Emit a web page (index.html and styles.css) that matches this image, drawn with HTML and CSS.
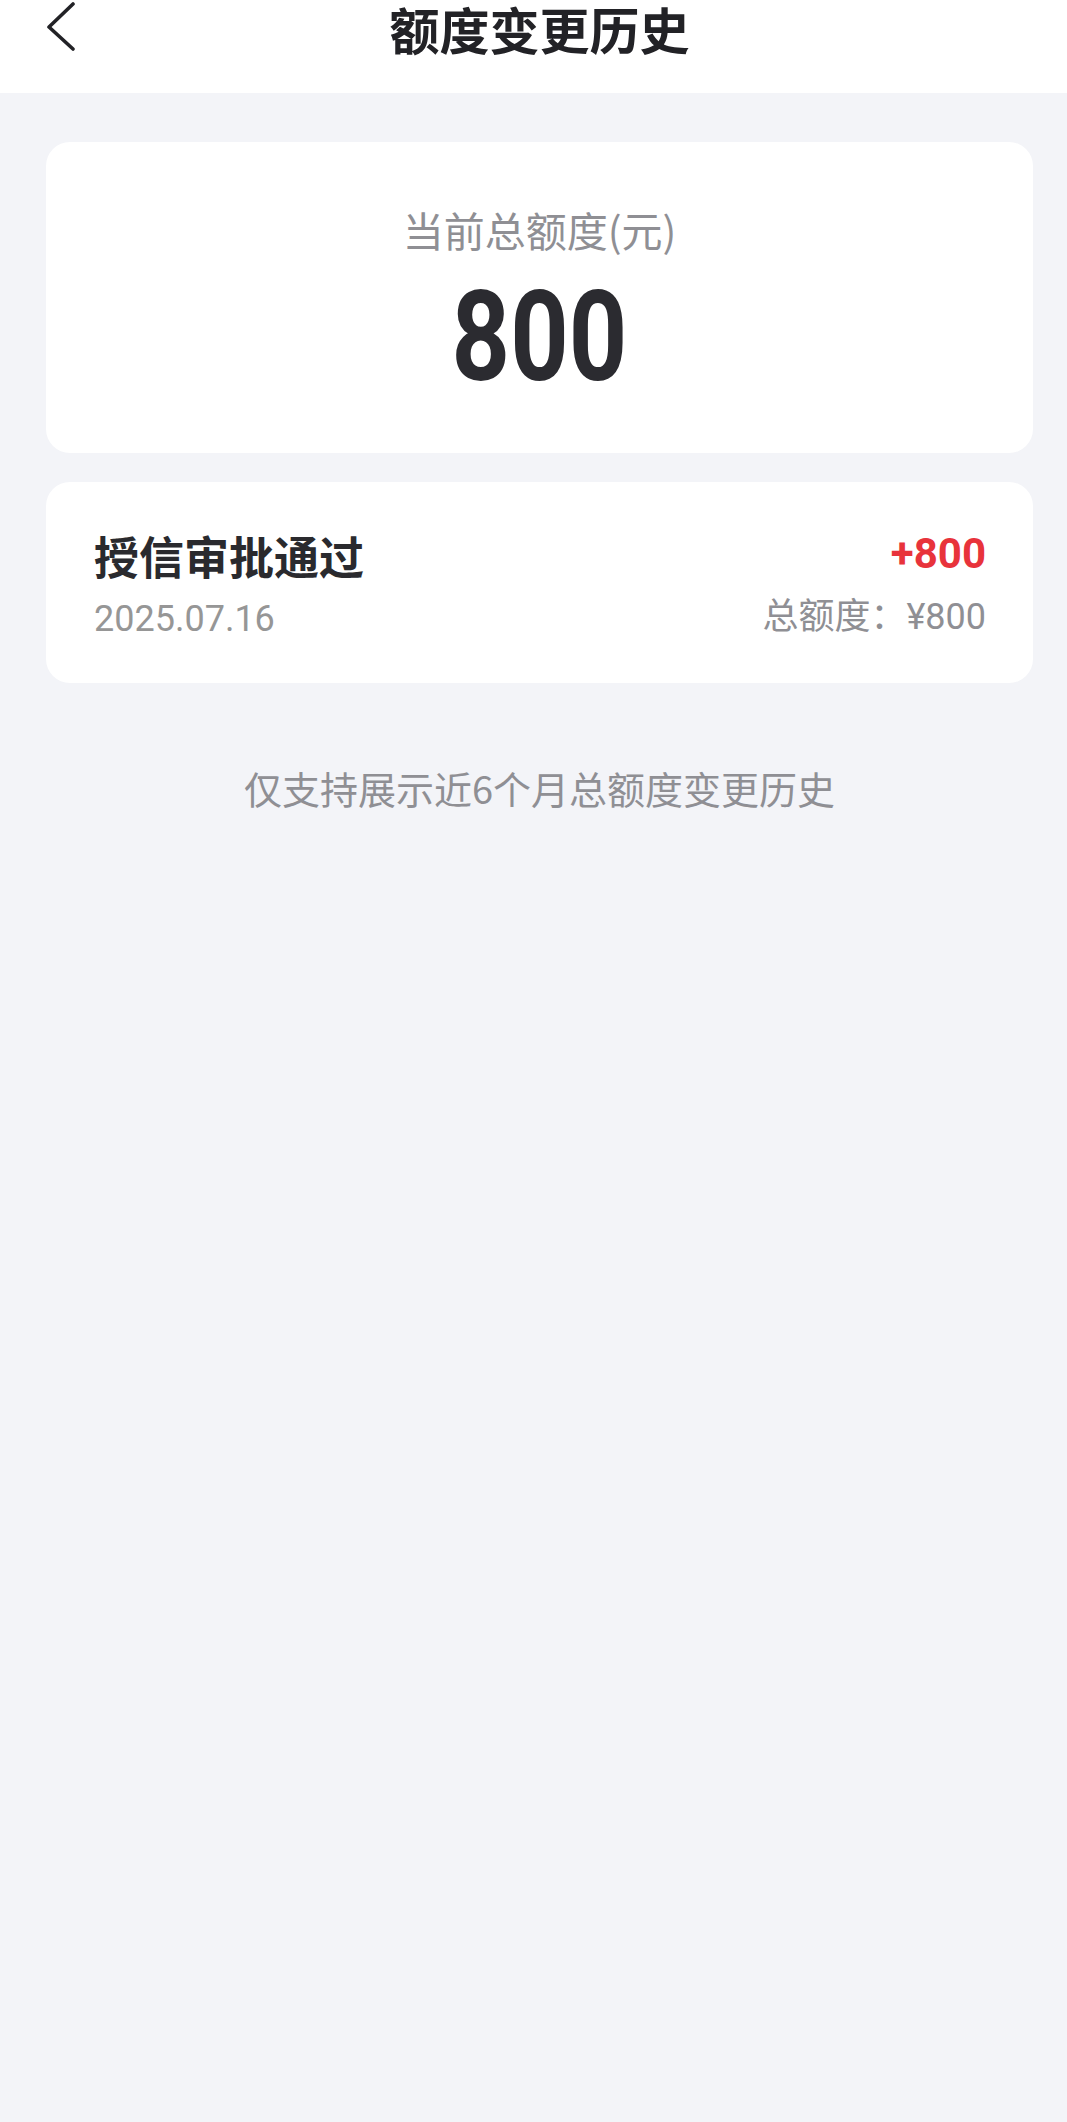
FILE: index.html
```html
<!DOCTYPE html>
<html>
<head>
    <meta charset="UTF-8" />
    <title>额度变更历史</title>
    <link rel="stylesheet" href="styles.css">
</head>
<body>
    <div class="top-bar">
        <a class="back" href="#">
            <svg width="30" height="50" viewBox="0 0 30 50">
                <path d="M27 2 L3 25 L27 47" fill="none" stroke="#222226" stroke-width="3.6" stroke-linecap="round" stroke-linejoin="round" />
            </svg>
        </a>
        <h1 class="title">额度变更历史</h1>
    </div>

    <div class="content">
        <div class="total-card">
            <p class="total-label">当前总额度(元)</p>
            <p class="total-value"><span>800</span></p>
        </div>

        <div class="record">
            <div class="record-left">
                <p class="record-name">授信审批通过</p>
                <p class="record-date">2025.07.16</p>
            </div>
            <div class="record-right">
                <p class="record-change">+800</p>
                <p class="record-total">总额度：¥800</p>
            </div>
        </div>

        <p class="tip">仅支持展示近6个月总额度变更历史</p>
    </div>
</body>
</html>
```

FILE: styles.css
```css
* {
    margin: 0;
    padding: 0;
    box-sizing: border-box;
}
body {
    font-family: Roboto, "Noto Sans CJK SC", sans-serif;
    background-color: #f3f4f8;
    min-height: 2122px;
}
.top-bar {
    height: 93px;
    padding-left: 12px;
    background-color: #fff;
    position: relative;
}
.back {
    position: absolute;
    left: 46px;
    top: 2px;
    display: block;
    width: 30px;
    height: 50px;
}
.back svg {
    display: block;
}
.title {
    text-align: center;
    font-family: "Noto Sans CJK SC", sans-serif;
    font-size: 50px;
    font-weight: 700;
    line-height: 56px;
    color: #222226;
}
.content {
    padding: 49px 34px 0 46px;
}
.total-card {
    background-color: #fff;
    border-radius: 24px;
    padding: 62px 0 61px;
    text-align: center;
}
.total-label {
    font-family: "Noto Sans CJK SC", sans-serif;
    font-size: 41px;
    line-height: 50px;
    color: #8f8f94;
}
.total-value {
    margin-top: 28px;
    font-size: 126px;
    font-weight: 700;
    line-height: 110px;
    color: #2b2b30;
}
.total-value span {
    display: inline-block;
    transform: scaleX(0.81);
}
.record {
    margin-top: 29px;
    background-color: #fff;
    border-radius: 24px;
    padding: 47px 47px 42px 48px;
    display: flex;
    justify-content: space-between;
    align-items: flex-start;
}
.record-name {
    font-family: "Noto Sans CJK SC", sans-serif;
    font-size: 45px;
    font-weight: 700;
    line-height: 54px;
    color: #2a2a2e;
}
.record-date {
    margin-top: 14px;
    font-size: 36px;
    line-height: 44px;
    color: #969696;
}
.record-right {
    text-align: right;
}
.record-change {
    font-size: 42px;
    font-weight: 700;
    line-height: 50px;
    color: #e8333b;
}
.record-total {
    margin-top: 16px;
    font-size: 36px;
    line-height: 44px;
    color: #8f8f94;
}
.tip {
    margin-top: 81px;
    text-align: center;
    font-family: "Noto Sans CJK SC", sans-serif;
    font-size: 38px;
    line-height: 48px;
    color: #8f8f94;
}
```
